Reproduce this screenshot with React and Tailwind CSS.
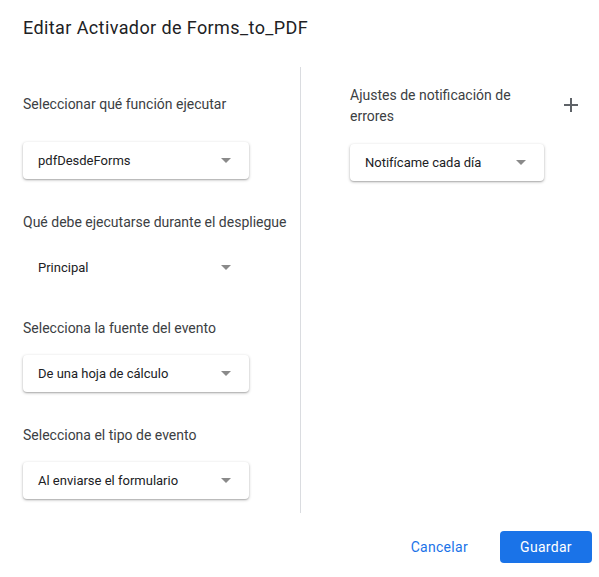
import React from "react";

const font = { fontFamily: "Roboto, 'Liberation Sans', Arial, sans-serif" };

function Arrow() {
  return (
    <span className="block w-0 h-0 border-l-[5px] border-r-[5px] border-t-[5px] border-l-transparent border-r-transparent border-t-[#8a8a8a]" />
  );
}

function Select({ label, flat, w = "w-[226px]" }) {
  return (
    <div
      className={`${w} h-[37px] flex items-center justify-between pl-[15px] pr-[18px] rounded-[4px] bg-white ${
        flat ? "" : "shadow-[0_1px_3px_rgba(0,0,0,0.3),0_1px_1px_rgba(0,0,0,0.1)]"
      }`}
    >
      <span className="text-[13px] text-[#202124] leading-none">{label}</span>
      <Arrow />
    </div>
  );
}

export default function App() {
  return (
    <div
      className="w-[599px] h-[577px] bg-white flex flex-col overflow-hidden"
      style={font}
    >
      <div className="pl-[23px] pt-[16px] h-[67px]">
        <h1 className="text-[18px] leading-[24px] text-[#202124] font-normal tracking-[0.4px]">
          Editar Activador de Forms_to_PDF
        </h1>
      </div>
      <div className="flex h-[446px]">
        <div className="w-[300px] pl-[23px] pt-[27px] flex flex-col">
          <div className="text-[14px] leading-[20px] text-[#3c4043]">
            Seleccionar qué función ejecutar
          </div>
          <div className="mt-[28px]">
            <Select label="pdfDesdeForms" />
          </div>
          <div className="mt-[33px] text-[14px] leading-[20px] text-[#3c4043]">
            Qué debe ejecutarse durante el despliegue
          </div>
          <div className="mt-[17px]">
            <Select label="Principal" flat />
          </div>
          <div className="mt-[32px] text-[14px] leading-[20px] text-[#3c4043]">
            Selecciona la fuente del evento
          </div>
          <div className="mt-[17px]">
            <Select label="De una hoja de cálculo" />
          </div>
          <div className="mt-[33px] text-[14px] leading-[20px] text-[#3c4043]">
            Selecciona el tipo de evento
          </div>
          <div className="mt-[17px]">
            <Select label="Al enviarse el formulario" />
          </div>
        </div>
        <div className="w-px bg-[#dadce0]" />
        <div className="pl-[49px] pt-[18px] flex flex-col">
          <div className="flex items-start">
            <div className="w-[180px] text-[14px] leading-[21px] text-[#3c4043]">
              Ajustes de notificación de errores
            </div>
            <div className="ml-[34px] mt-[13px] w-[14px] h-[14px] relative">
              <span className="absolute left-0 top-[6px] w-[14px] h-[1.5px] bg-[#5f6368]" />
              <span className="absolute top-0 left-[6px] h-[14px] w-[1.5px] bg-[#5f6368]" />
            </div>
          </div>
          <div className="mt-[17px]">
            <Select label="Notifícame cada día" w="w-[194px]" />
          </div>
        </div>
      </div>
      <div className="flex justify-end items-center pt-[18px] pr-[7px] gap-[27px]">
        <button className="h-[32px] px-[5px] text-[14px] font-normal text-[#1a73e8] tracking-[0.3px]">
          Cancelar
        </button>
        <button className="h-[32px] w-[92px] rounded-[4px] bg-[#1a73e8] text-white text-[14px] font-normal tracking-[0.3px]">
          Guardar
        </button>
      </div>
    </div>
  );
}
